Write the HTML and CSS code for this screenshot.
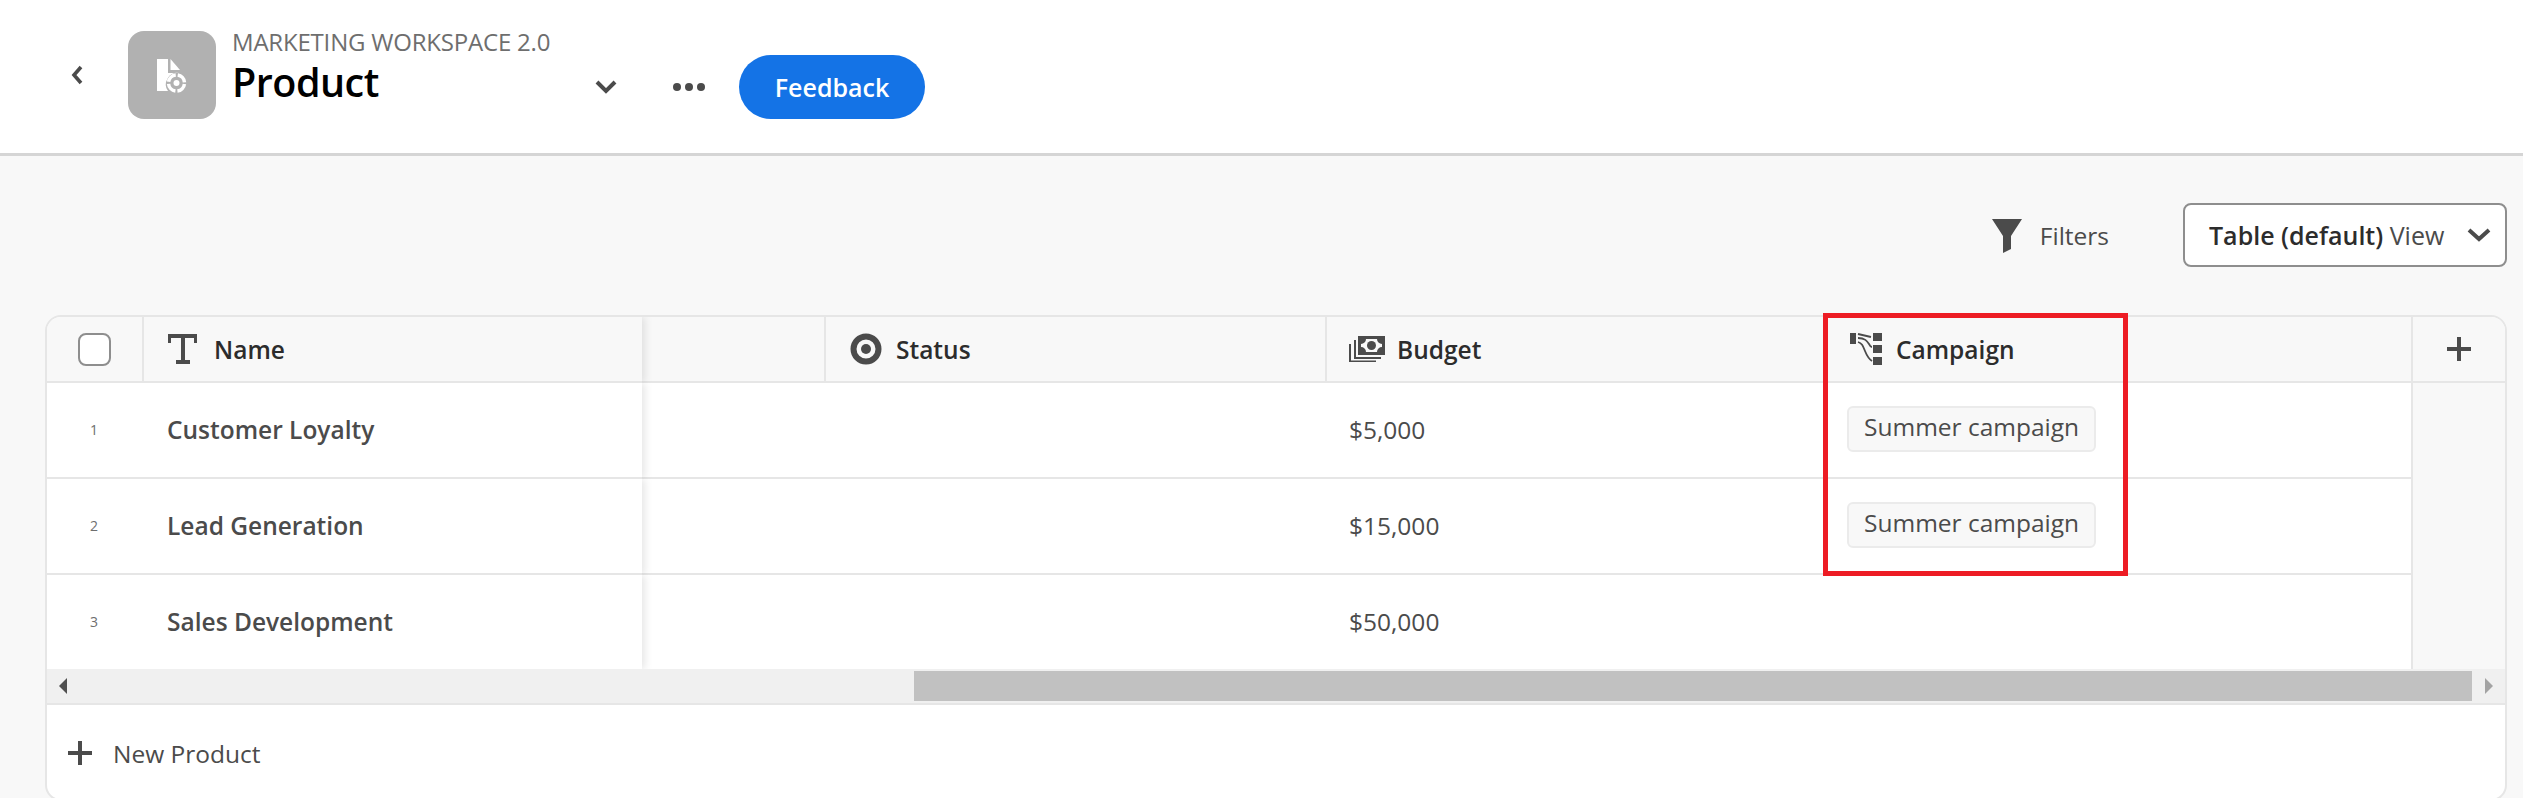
FILE: index.html
```html
<!DOCTYPE html>
<html lang="en">
<head>
    <meta charset="UTF-8">
    <meta name="viewport" content="width=device-width, initial-scale=1.0">
    <title>Product</title>
    <link rel="stylesheet" href="styles.css">
</head>
<body>
    <header class="topbar">
        <svg class="back" width="12" height="20" viewBox="0 0 12 20"><path d="M10 2 3 10l7 8" fill="none" stroke="#4b4b4b" stroke-width="3.6"/></svg>
        <div class="tile">
            <svg width="50" height="50" viewBox="0 0 50 50">
                <path d="M10 9H21V23H32A11.500 11.500 0 0 0 21 41H10z" fill="#fff"/>
                <path d="M23.500 9 33 20H23.500z" fill="#fff"/>
                <circle cx="29.500" cy="33" r="8" fill="none" stroke="#fff" stroke-width="3.500" stroke-dasharray="10.500 2.070" stroke-dashoffset="-1.030"/>
                <circle cx="29.500" cy="33" r="3" fill="#fff"/>
            </svg>
        </div>
        <div class="titles">
            <div class="workspace">MARKETING WORKSPACE 2.0</div>
            <div class="title">Product</div>
        </div>
        <svg class="title-chevron" width="24" height="16" viewBox="0 0 24 16"><path d="M3 3l9 9 9-9" fill="none" stroke="#4b4b4b" stroke-width="4"/></svg>
        <div class="dots"><span></span><span></span><span></span></div>
        <button class="feedback">Feedback</button>
    </header>

    <main class="content">
        <div class="toolbar">
            <svg class="funnel" width="30" height="34" viewBox="0 0 30 34"><path d="M0 0h30L19 17v13l-8 4V17z" fill="#4b4b4b"/></svg>
            <span class="filters">Filters</span>
            <div class="view-select">
                <span><b>Table (default)</b> View</span>
                <svg width="26" height="16" viewBox="0 0 26 16"><path d="M3 3l10 9 10-9" fill="none" stroke="#4b4b4b" stroke-width="4"/></svg>
            </div>
        </div>

        <div class="card">
            <div class="row head">
                <div class="cell check-cell"><span class="checkbox"></span></div>
                <div class="cell name-cell frozen">
                    <svg width="30" height="30" viewBox="0 0 30 30"><path d="M0 0h29v9h-3V4H17v22h5v4H8v-4h5V4H3v5H0z" fill="#4b4b4b"/></svg>
                    <span>Name</span>
                </div>
                <div class="cell spare"></div>
                <div class="cell status-cell">
                    <svg width="32" height="32" viewBox="0 0 32 32"><circle cx="16" cy="16" r="12.5" fill="none" stroke="#4b4b4b" stroke-width="6"/><circle cx="16" cy="16" r="5" fill="#4b4b4b"/></svg>
                    <span>Status</span>
                </div>
                <div class="cell budget-cell">
                    <svg width="36" height="26" viewBox="0 0 36 26"><path d="M9 0h27v19H9zM12 3v13h21V3z" fill="#4b4b4b" fill-rule="evenodd"/><rect x="12" y="3" width="21" height="13" fill="#f8f8f8"/><path d="M12 3h5a5 5 0 0 1-5 5zM33 3h-5a5 5 0 0 0 5 5zM12 16h5a5 5 0 0 0-5-5zM33 16h-5a5 5 0 0 1 5-5z" fill="#4b4b4b"/><circle cx="22.500" cy="9.500" r="4.500" fill="#4b4b4b"/><path d="M5 4v19h27v-2H7V4zM0 8v18h27v-1.500H2V8z" fill="#4b4b4b"/></svg>
                    <span>Budget</span>
                </div>
                <div class="cell campaign-cell">
                    <svg width="32" height="32" viewBox="0 0 32 32">
                        <path d="M0 0h6v11H0zM23 0h9v8h-9zM23 12h9v8h-9zM23 24h9v8h-9z" fill="#4b4b4b"/>
                        <path d="M8 1l13 3M8 5c7 0 9 3 11 6 1 2 2 3 3 3M8 9c4 1 5 4 7 9 2 5 4 8 7 10" fill="none" stroke="#4b4b4b" stroke-width="1.800"/>
                    </svg>
                    <span>Campaign</span>
                </div>
                <div class="cell add-cell">
                    <svg class="plus" width="24" height="24" viewBox="0 0 24 24"><path d="M10 0h4v10h10v4H14v10h-4V14H0v-4h10z" fill="#4b4b4b"/></svg>
                </div>
            </div>

            <div class="row">
                <div class="cell check-cell num">1</div>
                <div class="cell name-cell frozen">Customer Loyalty</div>
                <div class="cell spare"></div>
                <div class="cell status-cell"></div>
                <div class="cell budget-cell">$5,000</div>
                <div class="cell campaign-cell"><span class="tag">Summer campaign</span></div>
                <div class="cell add-cell"></div>
            </div>
            <div class="row">
                <div class="cell check-cell num">2</div>
                <div class="cell name-cell frozen">Lead Generation</div>
                <div class="cell spare"></div>
                <div class="cell status-cell"></div>
                <div class="cell budget-cell">$15,000</div>
                <div class="cell campaign-cell"><span class="tag">Summer campaign</span></div>
                <div class="cell add-cell"></div>
            </div>
            <div class="row last">
                <div class="cell check-cell num">3</div>
                <div class="cell name-cell frozen">Sales Development</div>
                <div class="cell spare"></div>
                <div class="cell status-cell"></div>
                <div class="cell budget-cell">$50,000</div>
                <div class="cell campaign-cell"></div>
                <div class="cell add-cell"></div>
            </div>

            <div class="scrollbar">
                <span class="arrow left"></span>
                <div class="track"><div class="thumb"></div></div>
                <span class="arrow right"></span>
            </div>

            <div class="new-row">
                <svg width="24" height="24" viewBox="0 0 24 24"><path d="M10 0h4v10h10v4H14v10h-4V14H0v-4h10z" fill="#4b4b4b"/></svg>
                <span>New Product</span>
            </div>

            <div class="highlight"></div>
        </div>
    </main>
</body>
</html>
```

FILE: styles.css
```css
html, body {
    height: 100%;
}

body {
    margin: 0;
    overflow: hidden;
    background-color: #f8f8f8;
    color: #4b4b4b;
    font-family: "Open Sans", "Noto Sans", sans-serif;
}

.topbar {
    display: flex;
    align-items: center;
    height: 153px;
    background-color: #fff;
    border-bottom: 3px solid #d5d5d5;
}

.back {
    margin: 0 0 3px 71px;
}

.tile {
    display: flex;
    align-items: center;
    justify-content: center;
    width: 88px;
    height: 88px;
    margin: 0 0 3px 45px;
    background-color: #b1b1b1;
    border-radius: 16px;
}

.titles {
    width: 362px;
    margin: 0 0 16px 16px;
}

.workspace {
    font-size: 24px;
    line-height: 26px;
    margin-bottom: 2px;
    margin-top: -2px;
    color: #6e6e6e;
    letter-spacing: -0.2px;
}

.title {
    font-size: 39.5px;
    line-height: 50px;
    font-weight: 600;
    color: #000;
    letter-spacing: -0.5px;
}

.title-chevron {
    margin-top: 20px;
}

.dots {
    display: flex;
    gap: 4px;
    margin: 20px 0 0 55px;
}

.dots span {
    width: 8px;
    height: 8px;
    border-radius: 50%;
    background-color: #4b4b4b;
}

.feedback {
    width: 186px;
    height: 64px;
    margin: 20px 0 0 34px;
    border: 0;
    border-radius: 32px;
    background-color: #1473e6;
    color: #fff;
    font-family: inherit;
    font-size: 25px;
    font-weight: 600;
}

.toolbar {
    display: flex;
    align-items: center;
    justify-content: flex-end;
    height: 64px;
    margin: 47px 16px 48px 0;
}

.funnel {
    margin-top: 2px;
}

.filters {
    margin: 0 74px 0 18px;
    font-size: 24.5px;
}

.view-select {
    display: flex;
    align-items: center;
    justify-content: space-between;
    box-sizing: border-box;
    width: 324px;
    height: 64px;
    padding: 0 13px 0 24px;
    background-color: #fff;
    border: 2px solid #8e8e8e;
    border-radius: 8px;
    font-size: 25px;
    white-space: nowrap;
}

.view-select b {
    font-weight: 600;
    color: #2c2c2c;
}

.card {
    position: relative;
    box-sizing: border-box;
    width: 2462px;
    height: 486px;
    margin-left: 45px;
    background-color: #fff;
    border: 2px solid #e6e6e6;
    border-radius: 16px;
}

.row {
    display: grid;
    grid-template-columns: 97px 498px 184px 501px 500px 584px 94px;
    height: 96px;
}

.row.head {
    height: 66px;
    font-weight: 600;
    color: #2c2c2c;
}

.row.last {
    height: 94px;
}

.cell {
    display: flex;
    align-items: center;
    box-sizing: border-box;
    padding-bottom: 2px;
    border-bottom: 2px solid #e6e6e6;
    font-size: 24.5px;
    white-space: nowrap;
}

.head .cell {
    padding-bottom: 0;
    background-color: #f8f8f8;
}

.row.last .cell {
    border-bottom: 0;
}

.head .cell svg {
    margin-right: 14px;
    flex-shrink: 0;
}

.check-cell {
    justify-content: center;
}

.head .check-cell {
    border-right: 2px solid #e6e6e6;
    border-top-left-radius: 14px;
}

.checkbox {
    box-sizing: border-box;
    width: 33px;
    height: 33px;
    background-color: #fff;
    border: 2px solid #8e8e8e;
    border-radius: 8px;
}

.num {
    padding-right: 3px;
    font-size: 14px;
    color: #6e6e6e;
}

.name-cell {
    position: relative;
    padding-left: 23px;
    font-weight: 600;
    background-color: #fff;
    box-shadow: 3px 0 8px rgba(0, 0, 0, 0.1);
    clip-path: inset(0 -14px 0 0);
}

.head .name-cell {
    padding-left: 24px;
}

.head .name-cell svg {
    margin-right: 16px;
}

.head .spare {
    border-right: 2px solid #e6e6e6;
}

.status-cell {
    padding-left: 24px;
}

.head .status-cell {
    border-right: 2px solid #e6e6e6;
}

.budget-cell {
    padding-left: 22px;
}

.head .budget-cell svg {
    margin-right: 12px;
}

.campaign-cell {
    padding-left: 20px;
}

.head .campaign-cell {
    padding-left: 23px;
}

.tag {
    display: block;
    box-sizing: border-box;
    height: 46px;
    padding: 0 15px;
    line-height: 38px;
    background-color: #f8f8f8;
    border: 2px solid #ebebeb;
    border-radius: 6px;
}

.add-cell,
.head .add-cell {
    justify-content: center;
    background-color: #f8f8f8;
    border-left: 2px solid #e6e6e6;
    border-bottom: 0;
}

.head .add-cell {
    border-bottom: 2px solid #e6e6e6;
    border-top-right-radius: 14px;
}

.head .add-cell svg {
    margin-right: 0;
}

.scrollbar {
    display: flex;
    align-items: center;
    height: 34px;
    background-color: #f0f0f0;
}

.arrow {
    flex: 0 0 auto;
    width: 0;
    height: 0;
    border-top: 8px solid transparent;
    border-bottom: 8px solid transparent;
}

.arrow.left {
    margin: 0 14px 0 12px;
    border-right: 8px solid #505050;
}

.arrow.right {
    margin: 0 12px 0 13px;
    border-left: 8px solid #a3a3a3;
}

.track {
    flex: 1;
    height: 30px;
}

.thumb {
    width: 1558px;
    height: 100%;
    margin-left: 833px;
    background-color: #c1c1c1;
}

.new-row {
    display: flex;
    align-items: center;
    gap: 21px;
    height: 96px;
    padding-left: 21px;
    border-top: 2px solid #e6e6e6;
    font-size: 24.5px;
}

.highlight {
    position: absolute;
    left: 1776px;
    top: -4px;
    width: 305px;
    height: 263px;
    box-sizing: border-box;
    border: 5px solid #ed1c24;
}
```
